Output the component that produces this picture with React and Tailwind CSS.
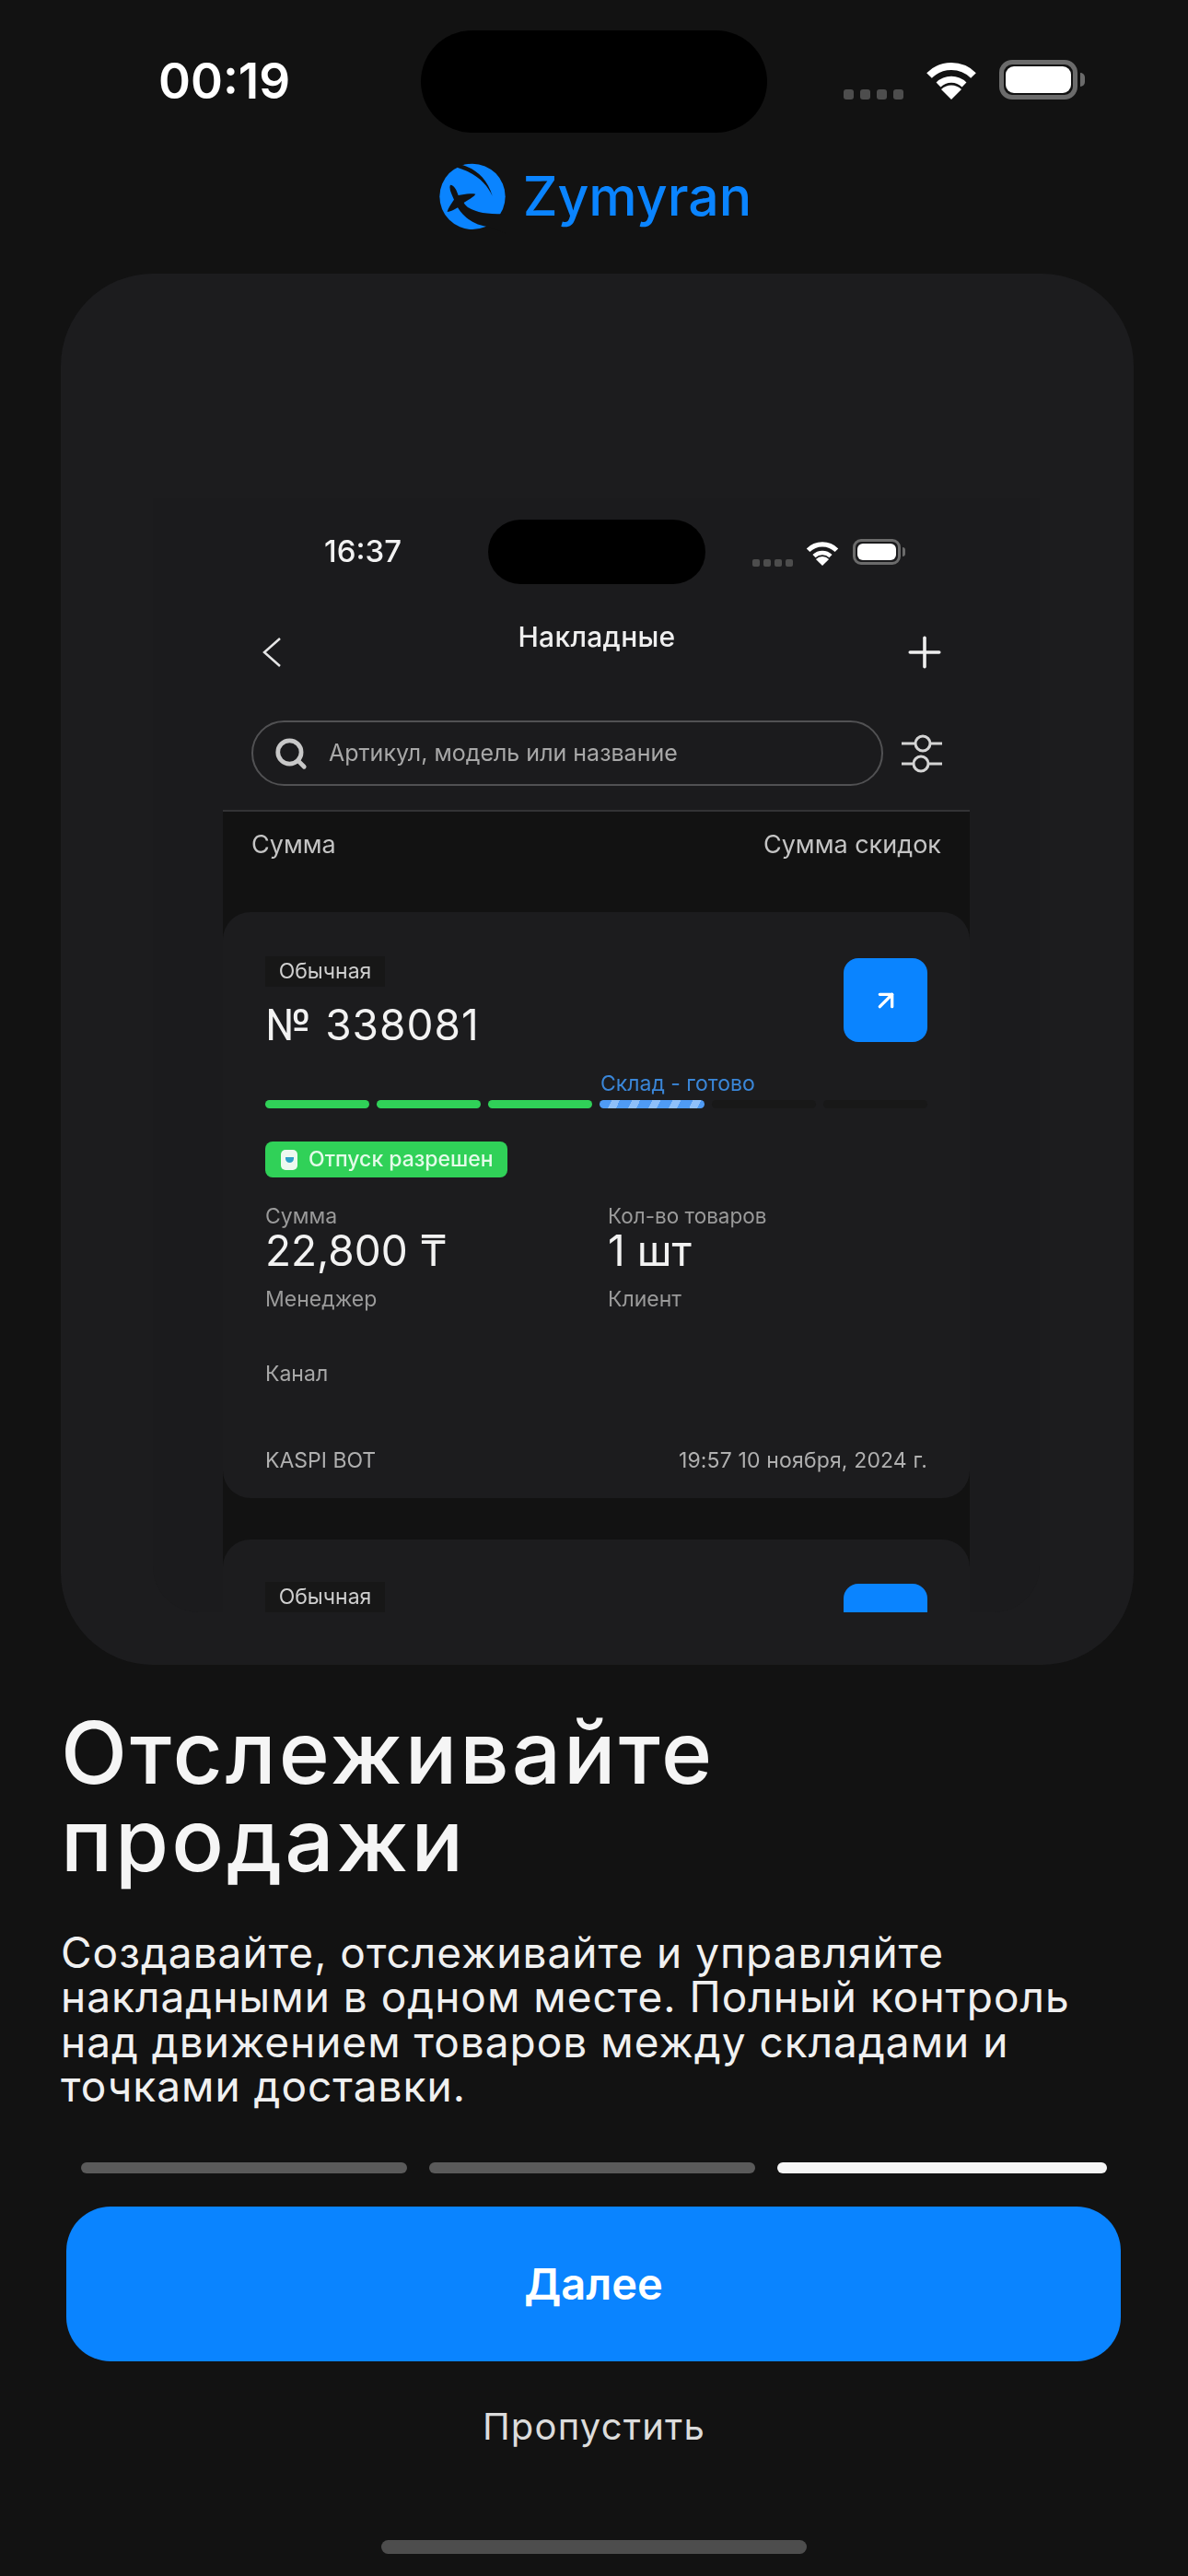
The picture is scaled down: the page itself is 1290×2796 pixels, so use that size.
import { ArrowUpRight, Plus, Search } from 'lucide-react'

function Wifi({ className }) {
  return (
    <svg viewBox="0 0 58 42" className={className} fill="none" stroke="currentColor">
      <path d="M5 16 A34 34 0 0 1 53 16" strokeWidth="8" />
      <path d="M15 26 A20 20 0 0 1 43 26" strokeWidth="7" />
      <path d="M29 42 L18 31 A15.500 15.500 0 0 1 40 31 Z" fill="currentColor" stroke="none" />
    </svg>
  )
}

function Logo() {
  return (
    <svg viewBox="0 0 270 258" className="h-[86px] w-[90px]">
      <circle cx="132" cy="130" r="107" fill="#0a84ff" />
      <path d="M84 24 C130 32 178 62 197 128 C180 92 150 56 84 36 Z" fill="#121212" />
      <path d="M60 92 C72 92 80 108 86 126 C104 124 124 118 142 122 C136 132 118 140 104 150 C112 168 152 192 240 186 L240 250 L190 230 C140 224 106 202 84 166 C72 174 60 180 50 180 C52 168 64 152 72 140 C66 124 54 106 60 92 Z" fill="#121212" />
    </svg>
  )
}

function FilterIcon() {
  return (
    <svg viewBox="0 0 44 42" className="h-[42px] w-[44px]" fill="none" stroke="#d4d4d4" strokeWidth="3">
      <circle cx="23" cy="10" r="8" />
      <circle cx="21" cy="32" r="8" />
      <path d="M0 10 H15 M31 10 H44 M0 32 H13 M29 32 H44" />
    </svg>
  )
}

function TagAndButton({ children }) {
  return (
    <div className="flex items-start justify-between">
      <div>
        <div className="flex h-[33px] w-[130px] items-center justify-center bg-[#171717] text-[23px] text-[#cfcfcf]">
          Обычная
        </div>
        {children}
      </div>
      <div className="mt-[2px] flex h-[91px] w-[91px] items-center justify-center rounded-[16px] bg-[#0a84ff] text-white">
        <ArrowUpRight size={32} strokeWidth={2.5} />
      </div>
    </div>
  )
}

function InvoiceCard() {
  return (
    <div className="rounded-[30px] bg-[#1c1c1e] px-[46px] pt-[48px] pb-[28px]">
      <TagAndButton>
        <p className="mt-[18px] text-[46px] leading-[46px] tracking-[1px] text-[#f2f2f2]">№ 338081</p>
      </TagAndButton>

      <p className="mt-[28px] pl-[364px] text-[23px] leading-[26px] text-[#3a86d8]">Склад - готово</p>
      <div className="mt-[5px] grid grid-cols-6 gap-[8px]">
        <div className="h-[9px] rounded-full bg-[#30d158]" />
        <div className="h-[9px] rounded-full bg-[#30d158]" />
        <div className="h-[9px] rounded-full bg-[#30d158]" />
        <div className="h-[9px] rounded-full bg-[repeating-linear-gradient(115deg,#4f9bf5_0px,#4f9bf5_12px,#8fc0fa_12px,#8fc0fa_20px)]" />
        <div className="h-[9px] rounded-full bg-[#181818]" />
        <div className="h-[9px] rounded-full bg-[#181818]" />
      </div>

      <div className="mt-[36px] flex h-[39px] w-[263px] items-center gap-[12px] rounded-[8px] bg-[#30d158] pl-[17px] text-[23px] font-medium text-[#e4fbe9]">
        <div className="flex h-[22px] w-[18px] items-center justify-center rounded-[5px] bg-[#eef9f0]">
          <div className="h-[6px] w-[9px] rounded-b-full bg-[#30a0c8]" />
        </div>
        Отпуск разрешен
      </div>

      <div className="mt-[29px] grid grid-cols-[372px_1fr]">
        <div>
          <p className="text-[23px] leading-[26px] text-[#9a9a9a]">Сумма</p>
          <p className="mt-[1px] text-[46px] leading-[46px] text-[#f2f2f2]">22,800 ₸</p>
          <p className="mt-[17px] text-[23px] leading-[26px] text-[#9a9a9a]">Менеджер</p>
        </div>
        <div>
          <p className="text-[22.500px] leading-[26px] text-[#9a9a9a]">Кол-во товаров</p>
          <p className="mt-[1px] text-[46px] leading-[46px] text-[#f2f2f2]">1 шт</p>
          <p className="mt-[17px] text-[23px] leading-[26px] text-[#9a9a9a]">Клиент</p>
        </div>
      </div>

      <p className="mt-[55px] text-[23px] leading-[26px] text-[#a8a8a8]">Канал</p>
      <div className="mt-[68px] flex justify-between text-[23px] leading-[26px] text-[#b0b0b0]">
        <span>KASPI BOT</span>
        <span className="tracking-[0.15px]">19:57 10 ноября, 2024 г.</span>
      </div>
    </div>
  )
}

function InnerScreen() {
  return (
    <div className="ml-[100px] h-[1210px] w-[963px] overflow-hidden rounded-b-[50px] bg-[#1b1b1d] pt-[24px] blur-[0.6px]">
      <div className="flex items-center pl-[186px]">
        <span className="w-[178px] text-[33px] font-medium text-[#f2f2f2]">16:37</span>
        <div className="h-[70px] w-[236px] rounded-full bg-black" />
        <div className="ml-[51px] flex items-end">
          <div className="mb-[-2px] flex gap-[4px]">
            <div className="h-[8px] w-[8px] rounded-[2px] bg-[#4d4d4d]" />
            <div className="h-[8px] w-[8px] rounded-[2px] bg-[#4d4d4d]" />
            <div className="h-[8px] w-[8px] rounded-[2px] bg-[#4d4d4d]" />
            <div className="h-[8px] w-[8px] rounded-[2px] bg-[#4d4d4d]" />
          </div>
          <Wifi className="mb-[-1px] ml-[13px] h-[27px] w-[38px] text-white" />
          <div className="ml-[14px] flex items-center">
            <div className="h-[28px] w-[52px] rounded-[9px] border-[3px] border-[#6b6b6b] p-[2px]">
              <div className="h-full rounded-[6px] bg-white" />
            </div>
            <div className="ml-[2px] h-[10px] w-[3px] rounded-r-full bg-[#6b6b6b]" />
          </div>
        </div>
      </div>

      <div className="mt-[38px] flex items-start pl-[119px] pr-[98px]">
        <svg viewBox="0 0 20 32" className="mt-[20px] h-[32px] w-[20px]" fill="none" stroke="#e5e5e5" strokeWidth="2.500">
          <path d="M19 1 L2 16 L19 31" />
        </svg>
        <p className="flex-1 pl-[14px] text-center text-[30px] font-medium leading-[38px] tracking-[0.3px] text-[#efefef]">Накладные</p>
        <Plus size={54} strokeWidth={1.6} className="mt-[9px] text-[#efefef]" />
      </div>

      <div className="mt-[47px] flex items-center pl-[107px]">
        <div className="flex h-[71px] w-[686px] items-center gap-[22px] rounded-full border-2 border-[#515153] pl-[22px]">
          <Search size={38} strokeWidth={3} className="text-[#c8c8c8]" />
          <span className="text-[25px] text-[#a8a8a8]">Артикул, модель или название</span>
        </div>
        <div className="ml-[20px]">
          <FilterIcon />
        </div>
      </div>

      <div className="mx-[76px] mt-[26px] border-t-2 border-[#333335] bg-[#121212]">
        <div className="flex h-[109px] justify-between px-[31px] pt-[19px] text-[27px] leading-[34px] text-[#c4c4c4]">
          <span>Сумма</span>
          <span>Сумма скидок</span>
        </div>
        <InvoiceCard />
        <div className="mt-[45px] rounded-t-[30px] bg-[#1c1c1e] px-[46px] pt-[46px]">
          <TagAndButton />
        </div>
      </div>
    </div>
  )
}

export default function App() {
  return (
    <div className="h-[2796px] w-[1290px] overflow-hidden bg-[#121212] font-['Inter',sans-serif]">
      <div className="flex items-center pl-[172px] pt-[33px]">
        <span className="mb-[2px] w-[285px] text-[53px] font-semibold leading-[60px] text-white">00:19</span>
        <div className="h-[111px] w-[376px] rounded-full bg-black" />
        <div className="ml-[83px] mb-[5px] flex items-end">
          <div className="flex gap-[7px]">
            <div className="h-[11px] w-[11px] rounded-[3px] bg-[#4d4d4d]" />
            <div className="h-[11px] w-[11px] rounded-[3px] bg-[#4d4d4d]" />
            <div className="h-[11px] w-[11px] rounded-[3px] bg-[#4d4d4d]" />
            <div className="h-[11px] w-[11px] rounded-[3px] bg-[#4d4d4d]" />
          </div>
          <Wifi className="ml-[23px] h-[42px] w-[58px] text-white" />
          <div className="ml-[23px] flex items-center">
            <div className="h-[43px] w-[85px] rounded-[14px] border-[5px] border-[#6b6b6b] p-[2px]">
              <div className="h-full rounded-[9px] bg-white" />
            </div>
            <div className="ml-[3px] h-[15px] w-[5px] rounded-r-full bg-[#6b6b6b]" />
          </div>
        </div>
      </div>

      <div className="mt-[26px] flex items-center justify-center gap-[9px] pr-[5px]">
        <Logo />
        <span className="text-[59px] font-medium leading-[70px] text-[#0a84ff]">Zymyran</span>
      </div>

      <div className="ml-[66px] mt-[41px] h-[1510px] w-[1165px] overflow-hidden rounded-[100px] bg-[#1c1c1e] pt-[243px]">
        <InnerScreen />
      </div>

      <h1 className="ml-[66px] mt-[48px] text-[94px] font-medium leading-[95px] tracking-[3px] text-[#f5f5f5]">
        Отслеживайте
        <br />
        продажи
      </h1>
      <p className="ml-[66px] mt-[50px] text-[46px] leading-[48.300px] tracking-[1px] text-[#f0f0f0]">
        Создавайте, отслеживайте и управляйте
        <br />
        накладными в одном месте. Полный контроль
        <br />
        над движением товаров между складами и
        <br />
        точками доставки.
      </p>

      <div className="ml-[88px] mt-[59px] grid grid-cols-[354px_354px_358px] gap-[24px]">
        <div className="h-[12px] rounded-full bg-[#5a5a5a]" />
        <div className="h-[12px] rounded-full bg-[#5a5a5a]" />
        <div className="h-[12px] rounded-full bg-[#f5f5f5]" />
      </div>

      <button className="ml-[72px] mt-[36px] flex h-[168px] w-[1145px] items-center justify-center rounded-[48px] bg-[#0a84ff] text-[47px] font-semibold text-white">
        Далее
      </button>

      <p className="mt-[47px] text-center text-[40px] leading-[48px] tracking-[1.200px] text-[#dcdcdc]">Пропустить</p>

      <div className="mx-auto mt-[99px] h-[15px] w-[462px] rounded-full bg-[#4d4d4d]" />
    </div>
  )
}
